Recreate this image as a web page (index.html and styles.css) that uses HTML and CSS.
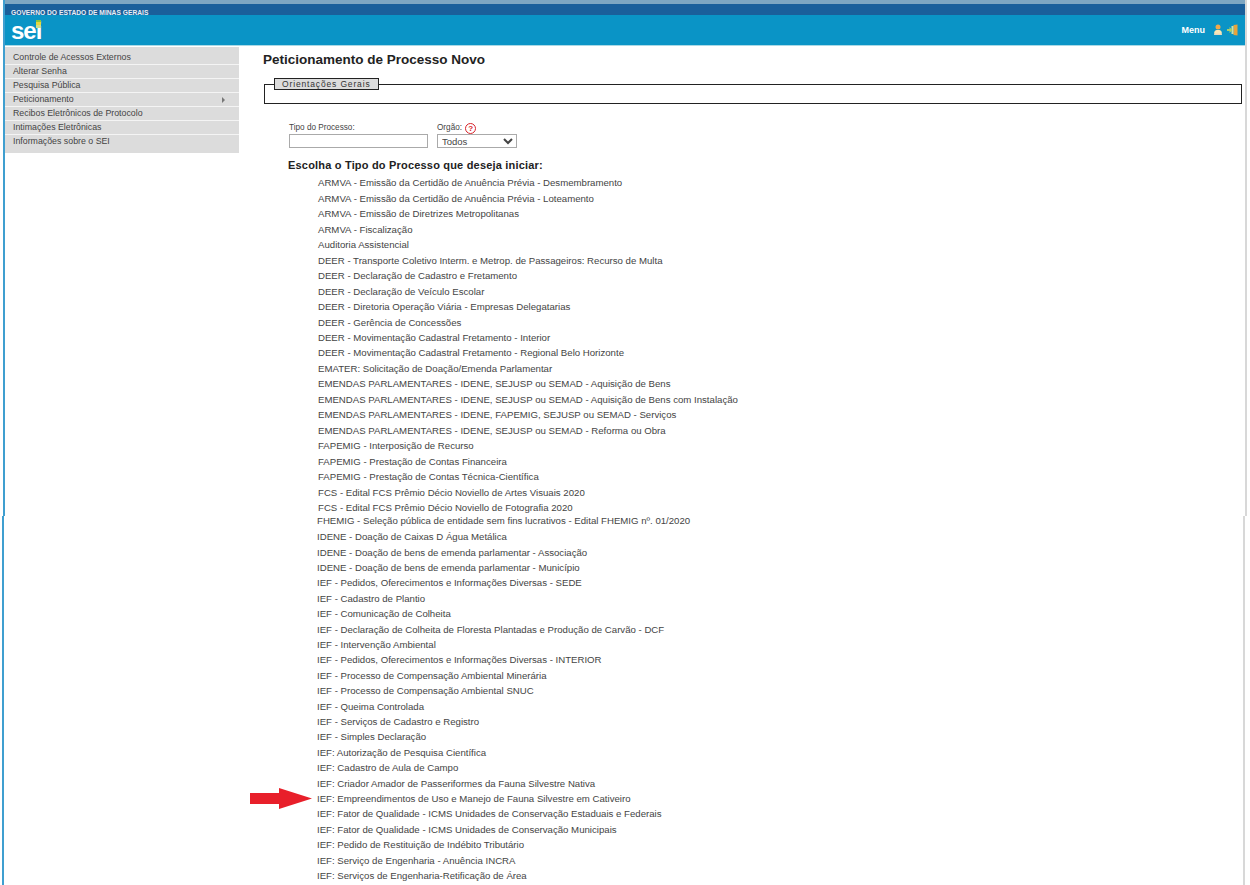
FILE: index.html
```html
<!DOCTYPE html>
<html lang="pt-BR">
<head>
<meta charset="utf-8">
<title>Peticionamento de Processo Novo</title>
<link rel="stylesheet" href="styles.css">
</head>
<body>
<div class="upper">
  <header class="header">
    <div class="gov">GOVERNO DO ESTADO DE MINAS GERAIS</div>
    <div class="brand">
      <div class="logo">sei<span class="logo-mark"></span></div>
      <div class="tools">
        <span class="menu">Menu</span>
        <svg class="tool-icon" viewBox="0 0 8 12" width="8" height="12"><circle cx="4" cy="3" r="2.500" fill="#f2a94a"/><path d="M.3 11V8.200C.3 6.600 2 6 4 6s3.700.6 3.700 2.200V11z" fill="#fbe7b4"/><path d="M.3 11h7.400V9.600H.3z" fill="#e9d9c0"/></svg>
        <svg class="tool-icon" viewBox="0 0 11 12" width="11" height="12"><path d="M6.500 1l4-.5V11.500l-4-.5z" fill="#e8a33c"/><path d="M6.500 2h-2v8h2z" fill="#cfe3a8"/><path d="M0 5h2.500V3l3 3-3 3V7H0z" fill="#a9cf6a"/></svg>
      </div>
    </div>
  </header>
  <div class="columns">
    <nav class="sidebar">
      <a class="nav-item">Controle de Acessos Externos</a>
      <a class="nav-item">Alterar Senha</a>
      <a class="nav-item">Pesquisa Pública</a>
      <a class="nav-item nav-more">Peticionamento<span class="caret"></span></a>
      <a class="nav-item">Recibos Eletrônicos de Protocolo</a>
      <a class="nav-item">Intimações Eletrônicas</a>
      <a class="nav-item">Informações sobre o SEI</a>
    </nav>
    <main class="main">
      <h1 class="title">Peticionamento de Processo Novo</h1>
      <fieldset class="guide"><legend class="guide-legend">Orientações Gerais</legend></fieldset>
      <div class="filters">
        <div class="filter">
          <label class="filter-label">Tipo do Processo:</label>
          <input class="type-input" type="text">
        </div>
        <div class="filter">
          <label class="filter-label">Orgão: <span class="help">?</span></label>
          <select class="org-select"><option>Todos</option></select>
        </div>
      </div>
      <h2 class="choose">Escolha o Tipo do Processo que deseja iniciar:</h2>
      <ul class="process-list">
        <li>ARMVA - Emissão da Certidão de Anuência Prévia - Desmembramento</li>
        <li>ARMVA - Emissão da Certidão de Anuência Prévia - Loteamento</li>
        <li>ARMVA - Emissão de Diretrizes Metropolitanas</li>
        <li>ARMVA - Fiscalização</li>
        <li>Auditoria Assistencial</li>
        <li>DEER - Transporte Coletivo Interm. e Metrop. de Passageiros: Recurso de Multa</li>
        <li>DEER - Declaração de Cadastro e Fretamento</li>
        <li>DEER - Declaração de Veículo Escolar</li>
        <li>DEER - Diretoria Operação Viária - Empresas Delegatarias</li>
        <li>DEER - Gerência de Concessões</li>
        <li>DEER - Movimentação Cadastral Fretamento - Interior</li>
        <li>DEER - Movimentação Cadastral Fretamento - Regional Belo Horizonte</li>
        <li>EMATER: Solicitação de Doação/Emenda Parlamentar</li>
        <li>EMENDAS PARLAMENTARES - IDENE, SEJUSP ou SEMAD - Aquisição de Bens</li>
        <li>EMENDAS PARLAMENTARES - IDENE, SEJUSP ou SEMAD - Aquisição de Bens com Instalação</li>
        <li>EMENDAS PARLAMENTARES - IDENE, FAPEMIG, SEJUSP ou SEMAD - Serviços</li>
        <li>EMENDAS PARLAMENTARES - IDENE, SEJUSP ou SEMAD - Reforma ou Obra</li>
        <li>FAPEMIG - Interposição de Recurso</li>
        <li>FAPEMIG - Prestação de Contas Financeira</li>
        <li>FAPEMIG - Prestação de Contas Técnica-Científica</li>
        <li>FCS - Edital FCS Prêmio Décio Noviello de Artes Visuais 2020</li>
        <li>FCS - Edital FCS Prêmio Décio Noviello de Fotografia 2020</li>
      </ul>
    </main>
  </div>
</div>
<div class="lower">
  <ul class="process-list process-list-lower">
    <li>FHEMIG - Seleção pública de entidade sem fins lucrativos - Edital FHEMIG nº. 01/2020</li>
    <li>IDENE - Doação de Caixas D Água Metálica</li>
    <li>IDENE - Doação de bens de emenda parlamentar - Associação</li>
    <li>IDENE - Doação de bens de emenda parlamentar - Município</li>
    <li>IEF - Pedidos, Oferecimentos e Informações Diversas - SEDE</li>
    <li>IEF - Cadastro de Plantio</li>
    <li>IEF - Comunicação de Colheita</li>
    <li>IEF - Declaração de Colheita de Floresta Plantadas e Produção de Carvão - DCF</li>
    <li>IEF - Intervenção Ambiental</li>
    <li>IEF - Pedidos, Oferecimentos e Informações Diversas - INTERIOR</li>
    <li>IEF - Processo de Compensação Ambiental Minerária</li>
    <li>IEF - Processo de Compensação Ambiental SNUC</li>
    <li>IEF - Queima Controlada</li>
    <li>IEF - Serviços de Cadastro e Registro</li>
    <li>IEF - Simples Declaração</li>
    <li>IEF: Autorização de Pesquisa Científica</li>
    <li>IEF: Cadastro de Aula de Campo</li>
    <li>IEF: Criador Amador de Passeriformes da Fauna Silvestre Nativa</li>
    <li class="marked"><svg class="arrow" viewBox="0 0 62 21" width="62" height="21"><path d="M0 5h29V0l33 10.500L29 21v-5H0z" fill="#e81f2a"/></svg>IEF: Empreendimentos de Uso e Manejo de Fauna Silvestre em Cativeiro</li>
    <li>IEF: Fator de Qualidade - ICMS Unidades de Conservação Estaduais e Federais</li>
    <li>IEF: Fator de Qualidade - ICMS Unidades de Conservação Municipais</li>
    <li>IEF: Pedido de Restituição de Indébito Tributário</li>
    <li>IEF: Serviço de Engenharia - Anuência INCRA</li>
    <li>IEF: Serviços de Engenharia-Retificação de Área</li>
  </ul>
</div>
</body>
</html>
```

FILE: styles.css
```css
* { box-sizing: border-box; }
html, body { margin: 0; padding: 0; background: #fff; }
body {
  width: 1250px;
  height: 885px;
  overflow: hidden;
  font-family: "Liberation Sans", Arial, sans-serif;
  color: #3c3c3c;
}
.upper {
  width: 1244px;
  height: 516px;
  margin-left: 3px;
  border-left: 2px solid #3f9fd0;
  border-right: 2px solid #d8d8d8;
  overflow: hidden;
}
.lower {
  width: 1243px;
  height: 369px;
  margin-left: 2px;
  border-left: 2px solid #3f9fd0;
  border-right: 2px solid #d8d8d8;
  overflow: hidden;
}
.header { background: #0a94c6; border-bottom: 1px solid #a9d9e6; }
.gov {
  height: 15px;
  padding: 5px 0 0 6px;
  border-top: 4px solid #7ea6c2;
  background: #1a5f9b;
  color: #e8f0f6;
  font-size: 6.700px;
  line-height: 7px;
  font-weight: bold;
}
.brand {
  height: 30px;
  display: flex;
  align-items: center;
  justify-content: space-between;
  padding: 0 7px 0 6px;
}
.logo {
  position: relative;
  width: 32px;
  padding-top: 2px;
  color: #fff;
  font-size: 24px;
  line-height: 26px;
  font-weight: bold;
  letter-spacing: -1px;
}
.logo-mark {
  position: absolute;
  left: 25px;
  top: 4px;
  width: 4.500px;
  height: 8px;
  background: linear-gradient(#8cc63f 0 30%, #e8d83c 30% 65%, #cfe08a 65%);
}
.tools { display: flex; align-items: center; gap: 5px; }
.menu { color: #fff; font-size: 9px; font-weight: bold; margin-right: 4px; }
.tool-icon { display: block; }
.columns { display: flex; align-items: flex-start; }
.sidebar {
  width: 234px;
  flex: none;
  margin-top: 1px;
  padding: 4px 0;
  background: #dcdcdc;
}
.nav-item {
  position: relative;
  display: block;
  height: 14px;
  padding-left: 8px;
  border-bottom: 1px solid #f4f4f4;
  font-size: 8.800px;
  line-height: 13px;
  color: #444;
}
.nav-item:last-child { border-bottom: 0; }
.caret {
  position: absolute;
  right: 14px;
  top: 4px;
  border-left: 3px solid #777;
  border-top: 3px solid transparent;
  border-bottom: 3px solid transparent;
}
.main { flex: 1; padding-left: 24px; }
.title {
  margin: 6px 0 0;
  font-size: 13.500px;
  line-height: 16px;
  color: #222;
  font-weight: bold;
}
.guide {
  width: 978px;
  height: 26px;
  margin: 10px 0 0 1px;
  padding: 0;
  border: 1px solid #222;
}
.guide-legend {
  margin-left: 9px;
  padding: 0 7px;
  height: 12px;
  background: #dcdcdc;
  border: 1px solid #222;
  font-size: 8.500px;
  line-height: 10px;
  letter-spacing: 0.850px;
  font-weight: 400;
  color: #333;
}
.filters { display: flex; gap: 9px; margin: 18px 0 0 26px; }
.filter { display: flex; flex-direction: column; }
.filter-label {
  display: block;
  height: 12px;
  font-size: 8.200px;
  line-height: 12px;
  color: #444;
}
.help {
  display: inline-block;
  width: 11px;
  height: 11px;
  border: 1px solid #d8232a;
  border-radius: 50%;
  color: #d8232a;
  font-size: 8px;
  line-height: 9px;
  font-weight: bold;
  text-align: center;
  margin-left: 1px;
  vertical-align: -1px;
}
.type-input {
  width: 139px;
  height: 14px;
  padding: 0;
  border: 1px solid #aaa;
  background: #fff;
}
.org-select {
  width: 80px;
  height: 14px;
  padding: 0;
  border: 1px solid #aaa;
  border-radius: 0;
  background: #fff;
  font-family: inherit;
  font-size: 9.500px;
  color: #444;
}
.choose {
  margin: 10px 0 0 25px;
  font-size: 11px;
  line-height: 14px;
  letter-spacing: 0.190px;
  font-weight: bold;
  color: #222;
}
.process-list {
  list-style: none;
  margin: 3.300px 0 0 55px;
  padding: 0;
  font-size: 9.650px;
  line-height: 15.470px;
  color: #444;
  white-space: nowrap;
}
.process-list-lower {
  margin: -3px 0 0 313px;
  line-height: 15.410px;
}
.process-list-lower li:first-child { margin-bottom: 0.700px; }
.marked { position: relative; }
.arrow { position: absolute; left: -67px; top: -3px; }
```
